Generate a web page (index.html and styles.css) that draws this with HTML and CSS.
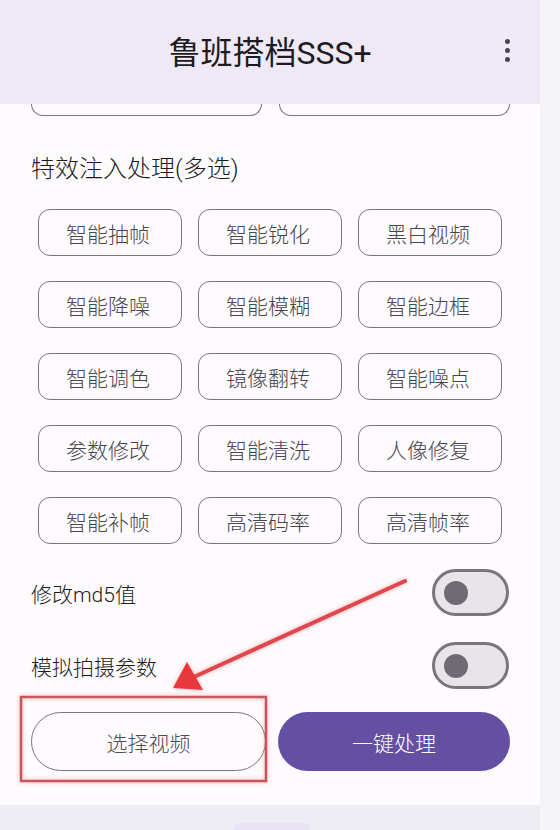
FILE: index.html
```html
<!DOCTYPE html>
<html lang="zh-CN">
<head>
    <meta charset="UTF-8">
    <meta name="viewport" content="width=device-width, initial-scale=1.0">
    <title>鲁班搭档SSS+</title>
    <link rel="stylesheet" href="styles.css">
</head>

<body>
    <div class="app">
        <!-- Barra superior -->
        <header class="topbar">
            <span></span>
            <h1>鲁班搭档SSS+</h1>
            <div class="menu">
                <i></i><i></i><i></i>
            </div>
        </header>

        <!-- Botões cortados pelo scroll -->
        <div class="peek">
            <div></div>
            <div></div>
        </div>

        <h2 class="section-title">特效注入处理(多选)</h2>

        <div class="chips">
            <div class="chip">智能抽帧</div>
            <div class="chip">智能锐化</div>
            <div class="chip">黑白视频</div>
            <div class="chip">智能降噪</div>
            <div class="chip">智能模糊</div>
            <div class="chip">智能边框</div>
            <div class="chip">智能调色</div>
            <div class="chip">镜像翻转</div>
            <div class="chip">智能噪点</div>
            <div class="chip">参数修改</div>
            <div class="chip">智能清洗</div>
            <div class="chip">人像修复</div>
            <div class="chip">智能补帧</div>
            <div class="chip">高清码率</div>
            <div class="chip">高清帧率</div>
        </div>

        <div class="option">
            <span>修改md5值</span>
            <div class="switch"><i></i></div>
        </div>
        <div class="option second">
            <span>模拟拍摄参数</span>
            <div class="switch"><i></i></div>
        </div>

        <div class="actions">
            <button class="btn outline">选择视频</button>
            <button class="btn filled">一键处理</button>
        </div>

        <div class="navbar">
            <div class="pill"></div>
        </div>
    </div>

    <!-- Anotações vermelhas por cima da tela -->
    <svg class="marks" width="560" height="830" viewBox="0 0 560 830">
        <rect x="21" y="697" width="245" height="84" fill="none" stroke="#c7575d" stroke-width="2.5"/>
        <line x1="405" y1="581" x2="196" y2="676" stroke="#e0474d" stroke-width="4" stroke-linecap="round"/>
        <polygon points="173,688 187,662 203,690" fill="#e8383e"/>
    </svg>
</body>
</html>
```

FILE: styles.css
```css
/* Reset */
* {
    margin: 0;
    padding: 0;
    box-sizing: border-box;
}

body {
    width: 560px;
    height: 830px;
    background-color: #f5f4f6;
    font-family: Roboto, "Noto Sans CJK SC", sans-serif;
    font-weight: 300;
    color: #1d1b20;
    position: relative;
    overflow: hidden;
}

.app {
    width: 540px;
    height: 830px;
    background-color: #fdfbfe;
    display: flex;
    flex-direction: column;
}

/* Barra superior */
.topbar {
    height: 104px;
    background-color: #efe9f5;
    display: grid;
    grid-template-columns: 1fr auto 1fr;
    align-items: center;
    padding-right: 30px;
}

.topbar h1 {
    font-size: 32px;
    font-weight: 400;
    color: #1d1b20;
    padding-left: 30px;
    margin-top: -4px;
}

.menu {
    justify-self: end;
    display: flex;
    flex-direction: column;
    gap: 4px;
    margin-top: -4px;
}

.menu i {
    display: block;
    width: 5px;
    height: 5px;
    border-radius: 50%;
    background-color: #49454f;
}

.peek {
    display: grid;
    grid-template-columns: 1fr 1fr;
    gap: 17px;
    padding: 0 30px 0 31px;
}

.peek div {
    height: 12px;
    border: 1.5px solid #79747e;
    border-top: none;
    border-radius: 0 0 12px 12px;
}

.section-title {
    font-size: 24px;
    font-weight: 300;
    line-height: 32px;
    margin-top: 37px;
    padding-left: 31px;
}

/* Chips de efeitos */
.chips {
    display: grid;
    grid-template-columns: repeat(3, 144px);
    column-gap: 16px;
    row-gap: 25px;
    padding: 0 38px;
    margin-top: 24px;
}

.chip {
    height: 47px;
    border: 1.5px solid #79747e;
    border-radius: 12px;
    display: flex;
    justify-content: center;
    align-items: center;
    font-size: 21px;
    color: #49454f;
    padding-right: 4px;
}

/* Opções com switch */
.option {
    display: flex;
    justify-content: space-between;
    align-items: center;
    padding: 0 31px;
    margin-top: 25px;
    font-size: 21px;
}

.option.second {
    margin-top: 26px;
}

.switch {
    width: 77px;
    height: 47px;
    border: 3px solid #79747e;
    border-radius: 24px;
    background-color: #e7e4ea;
    display: flex;
    align-items: center;
    padding-left: 9px;
}

.switch i {
    display: block;
    width: 24px;
    height: 24px;
    border-radius: 50%;
    background-color: #6f6b74;
}

/* Botões finais */
.actions {
    display: grid;
    grid-template-columns: 235px 232px;
    gap: 12px;
    padding-left: 31px;
    margin-top: 23px;
}

.btn {
    height: 59px;
    border-radius: 30px;
    font-family: Roboto, "Noto Sans CJK SC", sans-serif;
    font-weight: 300;
    font-size: 21px;
}

.btn.outline {
    background: transparent;
    border: 1.5px solid #79747e;
    color: #4f4b55;
}

.btn.filled {
    background-color: #644fa3;
    border: none;
    color: #ffffff;
}

.navbar {
    margin-top: auto;
    height: 25px;
    background-color: #efedf4;
    display: flex;
    justify-content: center;
    padding-left: 3px;
}

.pill {
    width: 77px;
    height: 14px;
    margin-top: 18px;
    border-radius: 7px;
    background-color: #e8e4f5;
}

/* Anotações */
.marks {
    position: absolute;
    top: 0;
    left: 0;
    pointer-events: none;
    filter: drop-shadow(0 0 2px rgba(240, 120, 120, 0.6));
}
```
